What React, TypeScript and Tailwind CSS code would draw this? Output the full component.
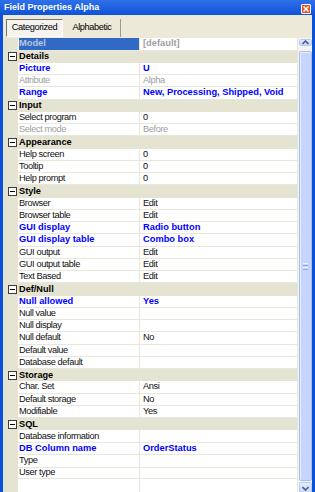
type Tone = "normal" | "set" | "off" | "selected";

type Row =
  | { kind: "group"; label: string }
  | { kind: "prop"; label: string; value?: string; tone?: Tone };

const rows: Row[] = [
  { kind: "prop", label: "Model", value: "[default]", tone: "selected" },
  { kind: "group", label: "Details" },
  { kind: "prop", label: "Picture", value: "U", tone: "set" },
  { kind: "prop", label: "Attribute", value: "Alpha", tone: "off" },
  { kind: "prop", label: "Range", value: "New, Processing, Shipped, Void", tone: "set" },
  { kind: "group", label: "Input" },
  { kind: "prop", label: "Select program", value: "0" },
  { kind: "prop", label: "Select mode", value: "Before", tone: "off" },
  { kind: "group", label: "Appearance" },
  { kind: "prop", label: "Help screen", value: "0" },
  { kind: "prop", label: "Tooltip", value: "0" },
  { kind: "prop", label: "Help prompt", value: "0" },
  { kind: "group", label: "Style" },
  { kind: "prop", label: "Browser", value: "Edit" },
  { kind: "prop", label: "Browser table", value: "Edit" },
  { kind: "prop", label: "GUI display", value: "Radio button", tone: "set" },
  { kind: "prop", label: "GUI display table", value: "Combo box", tone: "set" },
  { kind: "prop", label: "GUI output", value: "Edit" },
  { kind: "prop", label: "GUI output table", value: "Edit" },
  { kind: "prop", label: "Text Based", value: "Edit" },
  { kind: "group", label: "Def/Null" },
  { kind: "prop", label: "Null allowed", value: "Yes", tone: "set" },
  { kind: "prop", label: "Null value" },
  { kind: "prop", label: "Null display" },
  { kind: "prop", label: "Null default", value: "No" },
  { kind: "prop", label: "Default value" },
  { kind: "prop", label: "Database default" },
  { kind: "group", label: "Storage" },
  { kind: "prop", label: "Char. Set", value: "Ansi" },
  { kind: "prop", label: "Default storage", value: "No" },
  { kind: "prop", label: "Modifiable", value: "Yes" },
  { kind: "group", label: "SQL" },
  { kind: "prop", label: "Database information" },
  { kind: "prop", label: "DB Column name", value: "OrderStatus", tone: "set" },
  { kind: "prop", label: "Type" },
  { kind: "prop", label: "User type" },
];

const regular = "text-[9.25px] tracking-[-0.4px] font-normal";
const bold = "text-[9.3px] font-bold";

function MinusBox() {
  return (
    <svg width="9" height="9" viewBox="0 0 9 9">
      <rect x="0.5" y="0.5" width="8" height="8" fill="#ffffff" stroke="#3c3c3c" />
      <line x1="2" y1="4.5" x2="7" y2="4.5" stroke="#000000" />
    </svg>
  );
}

function labelClass(tone: Tone) {
  if (tone === "set") return `${bold} text-[#0000ff]`;
  if (tone === "off") return `${regular} text-[#a0a0a0]`;
  if (tone === "selected") return `${bold} text-[#b9c6de]`;
  return `${regular} text-[#111]`;
}

function valueClass(tone: Tone) {
  if (tone === "set") return `${bold} text-[#0000ff]`;
  if (tone === "off") return `${regular} text-[#a0a0a0]`;
  if (tone === "selected") return `${bold} text-[#a0a0a0]`;
  return `${regular} text-[#111]`;
}

function GridRow({ row, index }: { row: Row; index: number }) {
  const height = index % 2 === 0 ? "h-[13px]" : "h-[12px]";

  if (row.kind === "group") {
    return (
      <div className={`flex ${height} items-center bg-[#e5e3d2]`}>
        <div className="flex w-[15px] shrink-0 items-center pl-[5px]">
          <MinusBox />
        </div>
        <span className="pl-[1px] text-[9.2px] font-bold leading-none text-black">{row.label}</span>
      </div>
    );
  }

  const tone = row.tone ?? "normal";
  return (
    <div className={`flex ${height}`}>
      <div className="w-[15px] shrink-0 bg-[#e5e3d2]" />
      <div className="w-[122px] shrink-0 border-r border-b border-[#e8e7dc] bg-white pl-[1px]">
        <div
          className={`flex h-full items-center leading-none whitespace-nowrap ${
            tone === "selected" ? "bg-[#316ac5]" : ""
          } ${labelClass(tone)}`}
        >
          {row.label}
        </div>
      </div>
      <div
        className={`flex w-[158px] shrink-0 items-center border-r border-b border-[#e8e7dc] bg-white pl-[3px] leading-none whitespace-nowrap ${valueClass(
          tone,
        )}`}
      >
        {row.value ?? ""}
      </div>
    </div>
  );
}

function Caret({ up }: { up: boolean }) {
  return (
    <svg width="7" height="5" viewBox="0 0 7 5">
      <polyline
        points={up ? "0.5,4 3.5,1 6.5,4" : "0.5,1 3.5,4 6.5,1"}
        fill="none"
        stroke="#4d6185"
        strokeWidth="1.6"
      />
    </svg>
  );
}

function ScrollButton({ up }: { up: boolean }) {
  return (
    <div className="flex h-[13px] w-[13px] items-center justify-center rounded-[2px] border border-[#b9cbf6] bg-gradient-to-b from-[#e4ecfe] to-[#c2d3fa]">
      <Caret up={up} />
    </div>
  );
}

function ScrollBar() {
  return (
    <div className="flex w-[14px] shrink-0 flex-col bg-[#f3f3f0] pt-[1px] pl-[1px]">
      <ScrollButton up />
      <div className="h-[5px] shrink-0" />
      <div className="flex h-[430px] w-[13px] shrink-0 flex-col items-center justify-center gap-[1px] rounded-[2px] border border-[#a9bdf1] bg-[#c6d5fc] shadow-[inset_1px_1px_0_#e6edfe]">
        <div className="h-[1px] w-[5px] bg-[#eef3fe]" />
        <div className="h-[1px] w-[5px] bg-[#8ea8e8]" />
        <div className="h-[1px] w-[5px] bg-[#eef3fe]" />
        <div className="h-[1px] w-[5px] bg-[#8ea8e8]" />
      </div>
      <div className="mt-[1px]">
        <ScrollButton up={false} />
      </div>
    </div>
  );
}

export default function App() {
  return (
    <div className="flex h-[492px] w-[315px] flex-col overflow-hidden bg-[#0a50d8] font-['Liberation_Sans',Arial,sans-serif]">
      <div className="flex h-[15px] shrink-0 items-center justify-between bg-gradient-to-b from-[#2f70ea] to-[#0c52d9] pr-[4px] pl-[4px]">
        <span className="text-[9px] leading-none font-bold text-white">Field Properties Alpha</span>
        <div className="mt-[2px] flex h-[10px] w-[10px] items-center justify-center rounded-[1px] border border-white bg-[#e2542b]">
          <svg width="6" height="6" viewBox="0 0 6 6">
            <path d="M0.5 0.5 L5.5 5.5 M5.5 0.5 L0.5 5.5" stroke="#ffffff" strokeWidth="1.5" />
          </svg>
        </div>
      </div>

      <div className="mx-[3px] flex flex-1 flex-col overflow-hidden bg-[#ece9d8]">
        <div className="flex h-[23px] shrink-0 items-start pt-[4px] pl-[3px]">
          <div className="flex h-[18px] w-[57px] items-center justify-center border-t border-l border-[#77756a] border-r border-r-[#fdfdfb] border-b border-b-[#fdfdfb] bg-[#f4f3ee] text-[9.25px] tracking-[-0.4px] text-black">
            Categorized
          </div>
          <div className="flex h-[18px] w-[58px] items-center justify-center border-l border-l-[#f7e4de] border-r border-r-[#9d9b90] text-[9.25px] tracking-[-0.4px] text-black">
            Alphabetic
          </div>
        </div>

        <div className="flex flex-1 overflow-hidden">
          <div className="flex w-[295px] shrink-0 flex-col bg-white">
            {rows.map((row, i) => (
              <GridRow key={row.label} row={row} index={i} />
            ))}
            <div className="flex h-[13px]">
              <div className="w-[15px] shrink-0 bg-[#e5e3d2]" />
              <div className="w-[122px] shrink-0 border-r border-[#e8e7dc] bg-white" />
              <div className="w-[158px] shrink-0 border-r border-[#e8e7dc] bg-white" />
            </div>
          </div>
          <ScrollBar />
        </div>
      </div>
    </div>
  );
}
